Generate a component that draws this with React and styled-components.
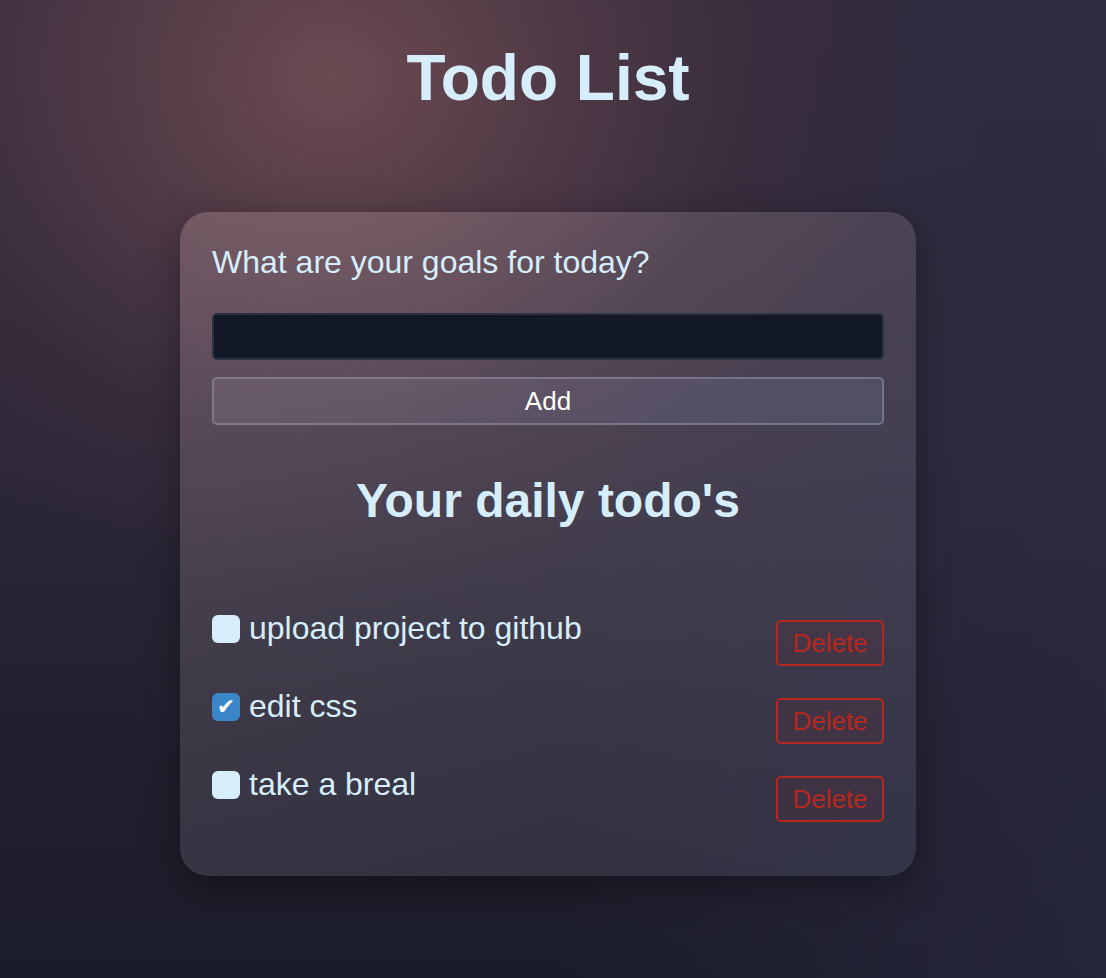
import React, { useState } from 'react';
import styled, { createGlobalStyle } from "styled-components";

const GlobalStyle = createGlobalStyle`
  * {
    box-sizing: border-box;
  }
  body {
    margin: 0;
    font-family: "Liberation Sans", Arial, sans-serif;
    background: #1c1d2b;
  }
`;

const initialTodos = [
  { id: 1, text: "upload project to github", done: false },
  { id: 2, text: "edit css", done: true },
  { id: 3, text: "take a breal", done: false },
];

const App = () => {
  const [todos, setTodos] = useState(initialTodos);
  const [value, setValue] = useState("");

  const addTodo = () => {
    if (!value.trim()) return;
    setTodos([...todos, { id: Date.now(), text: value, done: false }]);
    setValue("");
  };

  const toggle = (id) =>
    setTodos(todos.map((t) => (t.id === id ? { ...t, done: !t.done } : t)));

  const remove = (id) => setTodos(todos.filter((t) => t.id !== id));

  return (
    <Page>
      <GlobalStyle />
      <Title>Todo List</Title>
      <Card>
        <Prompt htmlFor="goal">What are your goals for today?</Prompt>
        <Input id="goal" value={value} onChange={(e) => setValue(e.target.value)} />
        <AddButton onClick={addTodo}>Add</AddButton>
        <Heading>Your daily todo's</Heading>
        <List>
          {todos.map((todo) => (
            <Row key={todo.id}>
              <Item>
                <Check
                  type="checkbox"
                  checked={todo.done}
                  onChange={() => toggle(todo.id)}
                />
                {todo.text}
              </Item>
              <DeleteButton onClick={() => remove(todo.id)}>Delete</DeleteButton>
            </Row>
          ))}
        </List>
      </Card>
    </Page>
  );
};

const Page = styled.div`
  min-height: 100vh;
  padding: 41px 10px 80px 0;
  display: flex;
  flex-direction: column;
  align-items: center;
  background:
    radial-gradient(ellipse 62% 62% at 30% 8%, rgba(108, 74, 82, 1) 0%, rgba(92, 64, 74, 0.75) 30%, rgba(70, 50, 64, 0.35) 60%, rgba(60, 45, 60, 0) 85%),
    linear-gradient(90deg, rgba(48, 40, 56, 0) 50%, rgba(44, 44, 66, 0.6) 100%),
    linear-gradient(180deg, #342b3c 0%, #2d2839 45%, #22202f 75%, #1b1c2a 100%);
`;

const Title = styled.h1`
  margin: 0;
  font-size: 64px;
  line-height: 74px;
  font-weight: 700;
  color: #d6eefc;
`;

const Card = styled.div`
  margin-top: 97px;
  width: 736px;
  padding: 32px 32px 54px;
  border-radius: 28px;
  display: flex;
  flex-direction: column;
  background: linear-gradient(
    150deg,
    rgba(255, 215, 222, 0.2) 0%,
    rgba(255, 235, 242, 0.12) 45%,
    rgba(210, 220, 255, 0.09) 100%
  );
  box-shadow: 0 10px 36px rgba(0, 0, 0, 0.35);
`;

const Prompt = styled.label`
  font-size: 32px;
  line-height: 37px;
  color: #d6eefc;
`;

const Input = styled.input`
  margin-top: 32px;
  height: 47px;
  width: 100%;
  padding: 0 12px;
  font-family: inherit;
  font-size: 24px;
  color: #d6eefc;
  background: #121826;
  border: 2px solid #2b3242;
  border-radius: 5px;
  &:focus {
    outline: none;
  }
`;

const AddButton = styled.button`
  margin-top: 17px;
  height: 48px;
  width: 100%;
  font-family: inherit;
  font-size: 26px;
  color: #ffffff;
  background: linear-gradient(90deg, rgba(200, 190, 215, 0.12), rgba(150, 170, 220, 0.14));
  border: 2px solid rgba(160, 160, 185, 0.45);
  border-radius: 5px;
  cursor: pointer;
`;

const Heading = styled.h2`
  margin: 48px 0 0;
  text-align: center;
  font-size: 48px;
  line-height: 55px;
  font-weight: 700;
  color: #d6eefc;
`;

const List = styled.ul`
  list-style: none;
  margin: 82px 0 0;
  padding: 0;
  display: flex;
  flex-direction: column;
  gap: 22px;
`;

const Row = styled.li`
  display: flex;
  justify-content: space-between;
  align-items: flex-start;
`;

const Item = styled.label`
  display: flex;
  align-items: center;
  gap: 9px;
  font-size: 32px;
  line-height: 37px;
  color: #d6eefc;
`;

const Check = styled.input`
  appearance: none;
  margin: 0;
  width: 28px;
  height: 28px;
  border-radius: 6px;
  background: #d6eefc;
  display: inline-flex;
  align-items: center;
  justify-content: center;
  cursor: pointer;
  &:checked {
    background: #3a86c9;
  }
  &:checked::after {
    content: "✔";
    color: #ffffff;
    font-family: "DejaVu Sans", sans-serif;
    font-size: 22px;
    line-height: 1;
  }
`;

const DeleteButton = styled.button`
  margin-top: 10px;
  width: 108px;
  height: 46px;
  padding: 0;
  font-family: inherit;
  font-size: 26px;
  color: #b5281f;
  background: rgba(160, 30, 30, 0.08);
  border: 2px solid #b5281f;
  border-radius: 5px;
  cursor: pointer;
`;

export default App;
